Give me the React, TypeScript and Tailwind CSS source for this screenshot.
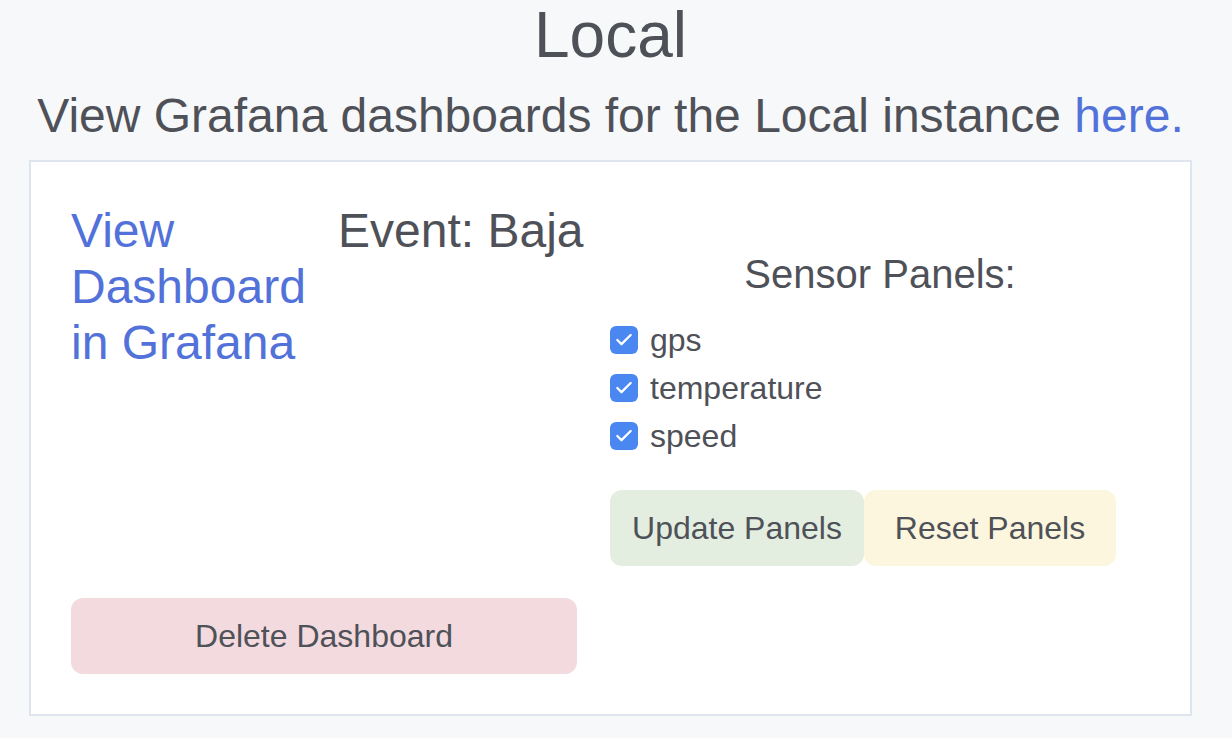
import { Check } from "lucide-react";

const panels = ["gps", "temperature", "speed"];

function Checkbox() {
  return (
    <span className="flex h-[28px] w-[28px] items-center justify-center rounded-[6px] bg-[#4a87f1]">
      <Check className="h-[20px] w-[20px] text-white" strokeWidth={2.75} />
    </span>
  );
}

export default function App() {
  return (
    <div className="min-h-screen bg-[#f7f8fa] font-['Liberation_Sans',Arial,sans-serif] text-[#4f5158]">
      <div className="ml-[29px] w-[1163px]">
        <h1 className="text-center text-[64px] leading-[70px]">Local</h1>
        <p className="mt-[18px] text-center text-[48px] leading-[56px]">
          View Grafana dashboards for the Local instance{" "}
          <a href="#" className="text-[#5272da]">
            here.
          </a>
        </p>

        {/* Dashboard card */}
        <div className="mt-4 border-2 border-[#dfe5ee] bg-white px-10 pt-[41px] pb-10">
          <div className="flex">
            <div className="flex w-[539px]">
              <a href="#" className="w-[235px] text-[48px] leading-[56px] text-[#5272da]">
                View Dashboard in Grafana
              </a>
              <div className="ml-8 whitespace-nowrap text-[48px] leading-[56px]">Event: Baja</div>
            </div>

            {/* Sensor panels */}
            <div className="mt-[47px] w-[540px]">
              <h3 className="text-center text-[40px] leading-[48px]">Sensor Panels:</h3>
              <div className="mt-[18px] flex flex-col">
                {panels.map((p) => (
                  <label key={p} className="flex h-12 items-center gap-3 text-[32px] leading-[48px]">
                    <Checkbox />
                    <span>{p}</span>
                  </label>
                ))}
              </div>
              <div className="mt-[30px] flex">
                <button className="flex h-[76px] w-[254px] items-center justify-center rounded-xl bg-[#e3eee0] text-[32px]">
                  Update Panels
                </button>
                <button className="flex h-[76px] w-[252px] items-center justify-center rounded-xl bg-[#fbf6dd] text-[32px]">
                  Reset Panels
                </button>
              </div>
            </div>
          </div>

          <button className="mt-8 flex h-[76px] w-[506px] items-center justify-center rounded-xl bg-[#f3dadf] text-[32px]">
            Delete Dashboard
          </button>
        </div>
      </div>
    </div>
  );
}
